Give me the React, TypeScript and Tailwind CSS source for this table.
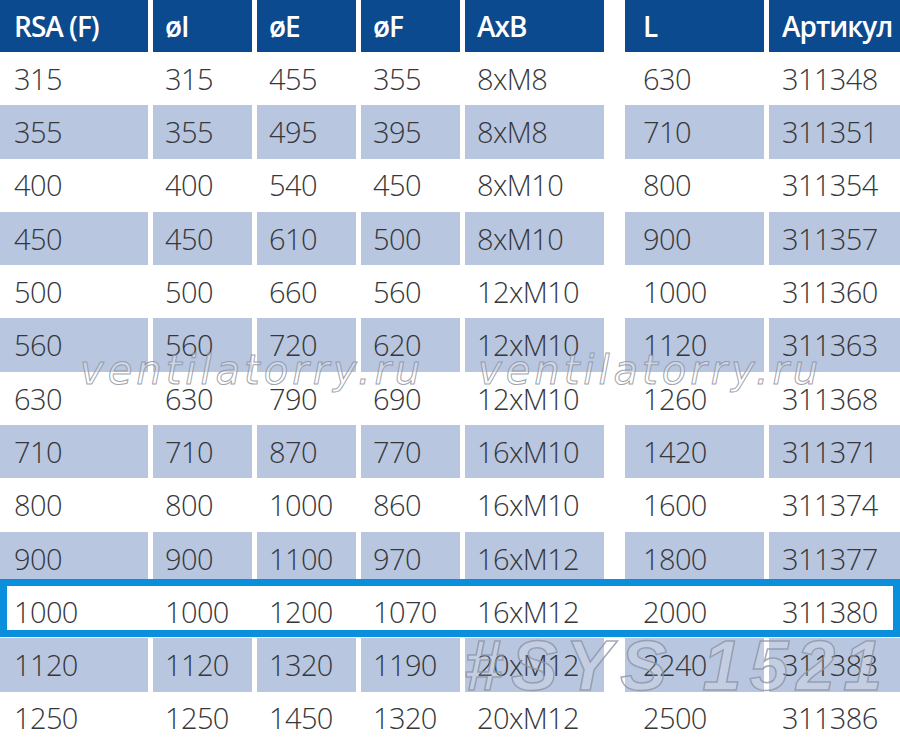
import React from 'react'

const headers = ['RSA (F)', 'øI', 'øE', 'øF', 'AxB', 'L', 'Артикул']

const rows = [
  ['315', '315', '455', '355', '8xM8', '630', '311348'],
  ['355', '355', '495', '395', '8xM8', '710', '311351'],
  ['400', '400', '540', '450', '8xM10', '800', '311354'],
  ['450', '450', '610', '500', '8xM10', '900', '311357'],
  ['500', '500', '660', '560', '12xM10', '1000', '311360'],
  ['560', '560', '720', '620', '12xM10', '1120', '311363'],
  ['630', '630', '790', '690', '12xM10', '1260', '311368'],
  ['710', '710', '870', '770', '16xM10', '1420', '311371'],
  ['800', '800', '1000', '860', '16xM10', '1600', '311374'],
  ['900', '900', '1100', '970', '16xM12', '1800', '311377'],
  ['1000', '1000', '1200', '1070', '16xM12', '2000', '311380'],
  ['1120', '1120', '1320', '1190', '20xM12', '2240', '311383'],
  ['1250', '1250', '1450', '1320', '20xM12', '2500', '311386'],
]

// padding per column; index 5 is the wide gap before "L"
const pads = ['pl-[14px]', 'pl-3', 'pl-3', 'pl-3', 'pl-3', 'pl-[18px]', 'pl-[13px]']

const gridCls =
  'grid grid-cols-[148px_99px_99px_99px_139px_11px_139px_131px] gap-x-[5px]'

const Row = ({ cells, head, shaded }: { cells: string[]; head?: boolean; shaded?: boolean }) => {
  const bg = head ? 'bg-[#0b4a8e]' : shaded ? 'bg-[#b9c6df]' : ''
  const out: React.ReactNode[] = []
  cells.forEach((c, i) => {
    if (i === 5) out.push(<div key="gap" />)
    out.push(
      <div key={i} className={`flex items-center ${bg} ${pads[i]}`}>
        {c}
      </div>
    )
  })
  return (
    <div
      className={`${gridCls} ${
        head
          ? 'h-[52px] text-white font-semibold text-[28px] tracking-[-1px]'
          : 'h-[53.3px] text-[#35373b] text-[29px] font-light tracking-[-0.6px]'
      }`}
    >
      {out}
    </div>
  )
}

const wmSite =
  "absolute top-[350px] text-[40px] leading-none italic tracking-[4px] font-['DejaVu_Sans',sans-serif] text-[rgba(255,255,255,0.3)] [-webkit-text-stroke:1px_rgba(140,146,160,0.85)] pointer-events-none"

export default function App() {
  return (
    <div className="relative w-[900px] h-[745px] overflow-hidden bg-white font-['Open_Sans',sans-serif]">
      <Row cells={headers} head />
      {rows.map((r, i) => (
        <Row key={r[6]} cells={r} shaded={i % 2 === 1} />
      ))}

      {/* selected row frame */}
      <div className="absolute left-0 top-[579px] w-[900px] h-[58px] border-[7px] border-[#0a8fdc]" />

      {/* watermarks */}
      <div className={`${wmSite} left-[80px]`}>ventilatorry.ru</div>
      <div className={`${wmSite} left-[478px]`}>ventilatorry.ru</div>
      <div className="absolute left-[464px] top-[631px] text-[70px] leading-none italic font-bold tracking-[8px] font-['Liberation_Sans',sans-serif] text-[rgba(255,255,255,0.15)] [-webkit-text-stroke:1.5px_rgba(140,148,166,0.8)] pointer-events-none">
        #SYS 1521
      </div>
    </div>
  )
}
